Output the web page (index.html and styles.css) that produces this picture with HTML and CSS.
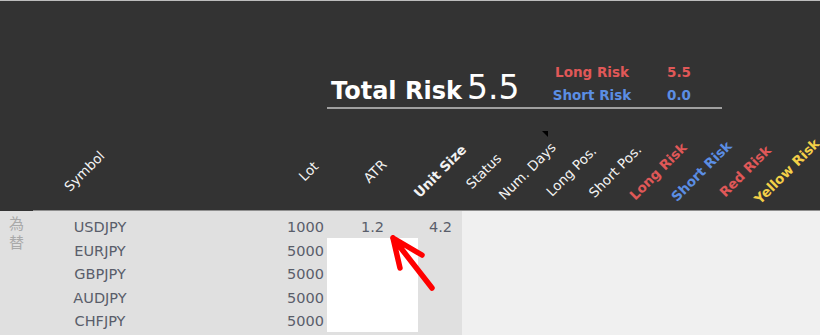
FILE: index.html
```html
<!DOCTYPE html>
<html>
<head>
	<meta charset="utf-8"/>
	<title>Risk Sheet</title>
	<link rel="stylesheet" href="styles.css">
</head>
<body>
	<div id="page">
		<div id="top">
			<div id="summary">
				<div id="total"><span class="total-label">Total Risk</span> <span class="total-value">5.5</span></div>
				<div id="sides">
					<span class="long">Long Risk</span><span class="long val">5.5</span>
					<span class="short">Short Risk</span><span class="short val">0.0</span>
				</div>
			</div>
		</div>
		<div id="heads">
			<div class="h h-first"></div>
			<div class="h h-symbol"><span>Symbol</span></div>
			<div class="h h-lot"><span>Lot</span></div>
			<div class="h h-atr"><span>ATR</span></div>
			<div class="h"><span class="bold">Unit Size</span></div>
			<div class="h"><span>Status</span></div>
			<div class="h noted"><span>Num. Days</span></div>
			<div class="h"><span>Long Pos.</span></div>
			<div class="h"><span>Short Pos.</span></div>
			<div class="h"><span class="bold long">Long Risk</span></div>
			<div class="h"><span class="bold short">Short Risk</span></div>
			<div class="h"><span class="bold long">Red Risk</span></div>
			<div class="h"><span class="bold yellow">Yellow Risk</span></div>
			<div class="h"></div>
		</div>
		<div id="sheet">
			<div id="data">
				<div class="cat">為<br>替</div>
				<div class="c sym">USDJPY</div><div class="c num">1000</div><div class="c atr">1.2</div><div class="c unit">4.2</div>
				<div class="c sym">EURJPY</div><div class="c num">5000</div><div class="c atr blank"></div><div class="c unit"></div>
				<div class="c sym">GBPJPY</div><div class="c num">5000</div><div class="c atr blank"></div><div class="c unit"></div>
				<div class="c sym">AUDJPY</div><div class="c num">5000</div><div class="c atr blank"></div><div class="c unit"></div>
				<div class="c sym">CHFJPY</div><div class="c num">5000</div><div class="c atr blank"></div><div class="c unit"></div>
			</div>
			<div id="rest"></div>
		</div>
		<!-- hand-drawn pointer at the ATR cell -->
		<svg id="pointer" width="60" height="70" viewBox="0 0 60 70">
			<path d="M8 8 L47 58 M8 8 L37 25 M8 8 L15 38" fill="none" stroke="#f00" stroke-width="5.5" stroke-linecap="round" stroke-linejoin="round"/>
		</svg>
	</div>
</body>
</html>
```

FILE: styles.css
```css
body {
	margin: 0px;
	font-family: "DejaVu Sans", "Noto Sans CJK JP", sans-serif;
}
#page {
	position: relative;
	display: flex;
	flex-direction: column;
	height: 335px;
	border-top: 1px solid #bdbdbd;
	box-sizing: border-box;
	background-color: #333;
	overflow: hidden;
}
#top {
	height: 130px;
	flex: none;
}
#summary {
	margin-left: 327px;
	width: 395px;
	padding-top: 60px;
	display: flex;
	align-items: flex-end;
	border-bottom: 2px solid #a0a0a0;
}
#total {
	width: 215px;
	box-sizing: border-box;
	padding-left: 4px;
	color: #fff;
	line-height: 26px;
	white-space: nowrap;
}
.total-label {
	font-size: 24px;
	font-weight: bold;
}
.total-value {
	font-size: 33px;
}
#sides {
	display: grid;
	grid-template-columns: 100px 73px;
	grid-auto-rows: 23px;
	font-size: 13.5px;
	font-weight: bold;
	line-height: 23px;
	white-space: nowrap;
}
#sides span {
	text-align: center;
}
#sides .val {
	text-align: left;
	padding-left: 25px;
}
.long {
	color: #e05858;
}
.short {
	color: #5b8ee4;
}
.yellow {
	color: #f3cf48;
}
.bold {
	font-weight: bold;
}

/* rotated column titles */
#heads {
	display: grid;
	grid-template-columns: 33px 134px 160px 91px 44px 44px 43px 44px 44px 42px 45px 42px 42px 1fr;
	height: 80px;
	flex: none;
}
.h {
	position: relative;
	display: flex;
	align-items: center;
	justify-content: center;
	border-bottom: 1px solid #8f8f8f;
	font-size: 13.5px;
	color: #f2f2f2;
}
.h span {
	white-space: nowrap;
	transform: rotate(-45deg);
}
.h-first {
	border-bottom-color: #333;
}
.h-symbol {
	padding-right: 32px;
}
.h-lot {
	padding-left: 122px;
}
.h-atr {
	padding-left: 5px;
}
.noted::after {
	content: "";
	position: absolute;
	top: 0px;
	right: 1px;
	border-top: 6px solid #000;
	border-left: 6px solid transparent;
}

#sheet {
	flex: 1;
	display: flex;
}
#data {
	width: 462px;
	background-color: #e0e0e0;
	padding-top: 3px;
	display: grid;
	grid-template-columns: 33px 134px 160px 91px 44px;
	grid-template-rows: repeat(5, 23.5px);
	align-content: start;
	color: #595d6a;
	font-size: 14.5px;
}
#rest {
	flex: 1;
	background-color: #f0f0f0;
}
.cat {
	grid-row: 1 / 6;
	color: #a9a9a9;
	font-size: 15px;
	line-height: 19px;
	padding-top: 1px;
	text-align: center;
}
.c {
	padding-top: 3px;
	line-height: 20.5px;
	white-space: nowrap;
}
.sym {
	text-align: center;
}
.num {
	text-align: right;
	padding-right: 3px;
}
.atr {
	text-align: center;
}
.blank {
	background-color: #fff;
}
.unit {
	text-align: right;
	padding-right: 10px;
}
#pointer {
	position: absolute;
	left: 385px;
	top: 229px;
}
```
